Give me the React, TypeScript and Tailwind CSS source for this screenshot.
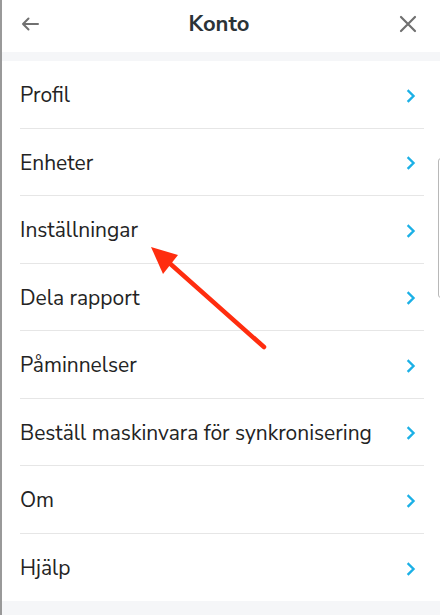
import type { FC } from "react";

const items = [
  "Profil",
  "Enheter",
  "Inställningar",
  "Dela rapport",
  "Påminnelser",
  "Beställ maskinvara för synkronisering",
  "Om",
  "Hjälp",
];

const Chevron: FC = () => (
  <svg width="10" height="14" viewBox="0 0 10 14" fill="none">
    <path d="M2.5 2l5 5-5 5" stroke="#1bb0e6" strokeWidth="2.4" strokeLinecap="square" />
  </svg>
);

const Row: FC<{ label: string; last?: boolean }> = ({ label, last }) => (
  <div className="pl-[18px] pr-4">
    <div
      className={`h-[67.5px] pt-[3px] flex items-center justify-between pr-[8px] ${
        last ? "" : "border-b border-[#e6e6e6]"
      }`}
    >
      <span className="text-[21px] text-[#232323]">{label}</span>
      <Chevron />
    </div>
  </div>
);

const App = () => {
  return (
    <div
      className="relative w-[440px] h-[615px] overflow-hidden bg-[#f5f6f8] border-l-2 border-[#999]"
      style={{ fontFamily: "'Nunito Sans', Lato, 'Noto Sans', sans-serif" }}
    >
      {/* Header */}
      <div className="h-[52px] bg-white flex items-center justify-between pl-[18px] pr-[22px] pb-[4px]">
        <svg width="20" height="16" viewBox="0 0 20 16" fill="none">
          <path d="M18 8H3M8.5 2.5L3 8l5.5 5.5" stroke="#707070" strokeWidth="2" strokeLinecap="round" strokeLinejoin="round" />
        </svg>
        <h1 className="text-[22px] font-bold text-[#2b3337]">Konto</h1>
        <svg width="20" height="20" viewBox="0 0 20 20" fill="none">
          <path d="M3 3l14 14M17 3L3 17" stroke="#707070" strokeWidth="2.2" strokeLinecap="round" />
        </svg>
      </div>

      {/* List */}
      <div className="mt-[9px] bg-white">
        {items.map((label, i) => (
          <Row key={label} label={label} last={i === items.length - 1} />
        ))}
      </div>

      {/* annotation arrow */}
      <svg className="absolute left-[-2px] top-0 pointer-events-none" width="440" height="615">
        <line x1="264" y1="347" x2="166" y2="260" stroke="#ff2d0f" strokeWidth="4.5" strokeLinecap="round" />
        <polygon points="151,247 178,255 163,274" fill="#ff2d0f" />
      </svg>

      {/* window edge at right */}
      <div className="absolute left-[436px] top-[158px] w-[10px] h-[140px] rounded-[3px] border border-[#b8b8b8]" />
      <div className="absolute left-[-2px] top-0 w-[2px] h-[6px] bg-[#7fa88a]" />
    </div>
  );
};

export default App;
